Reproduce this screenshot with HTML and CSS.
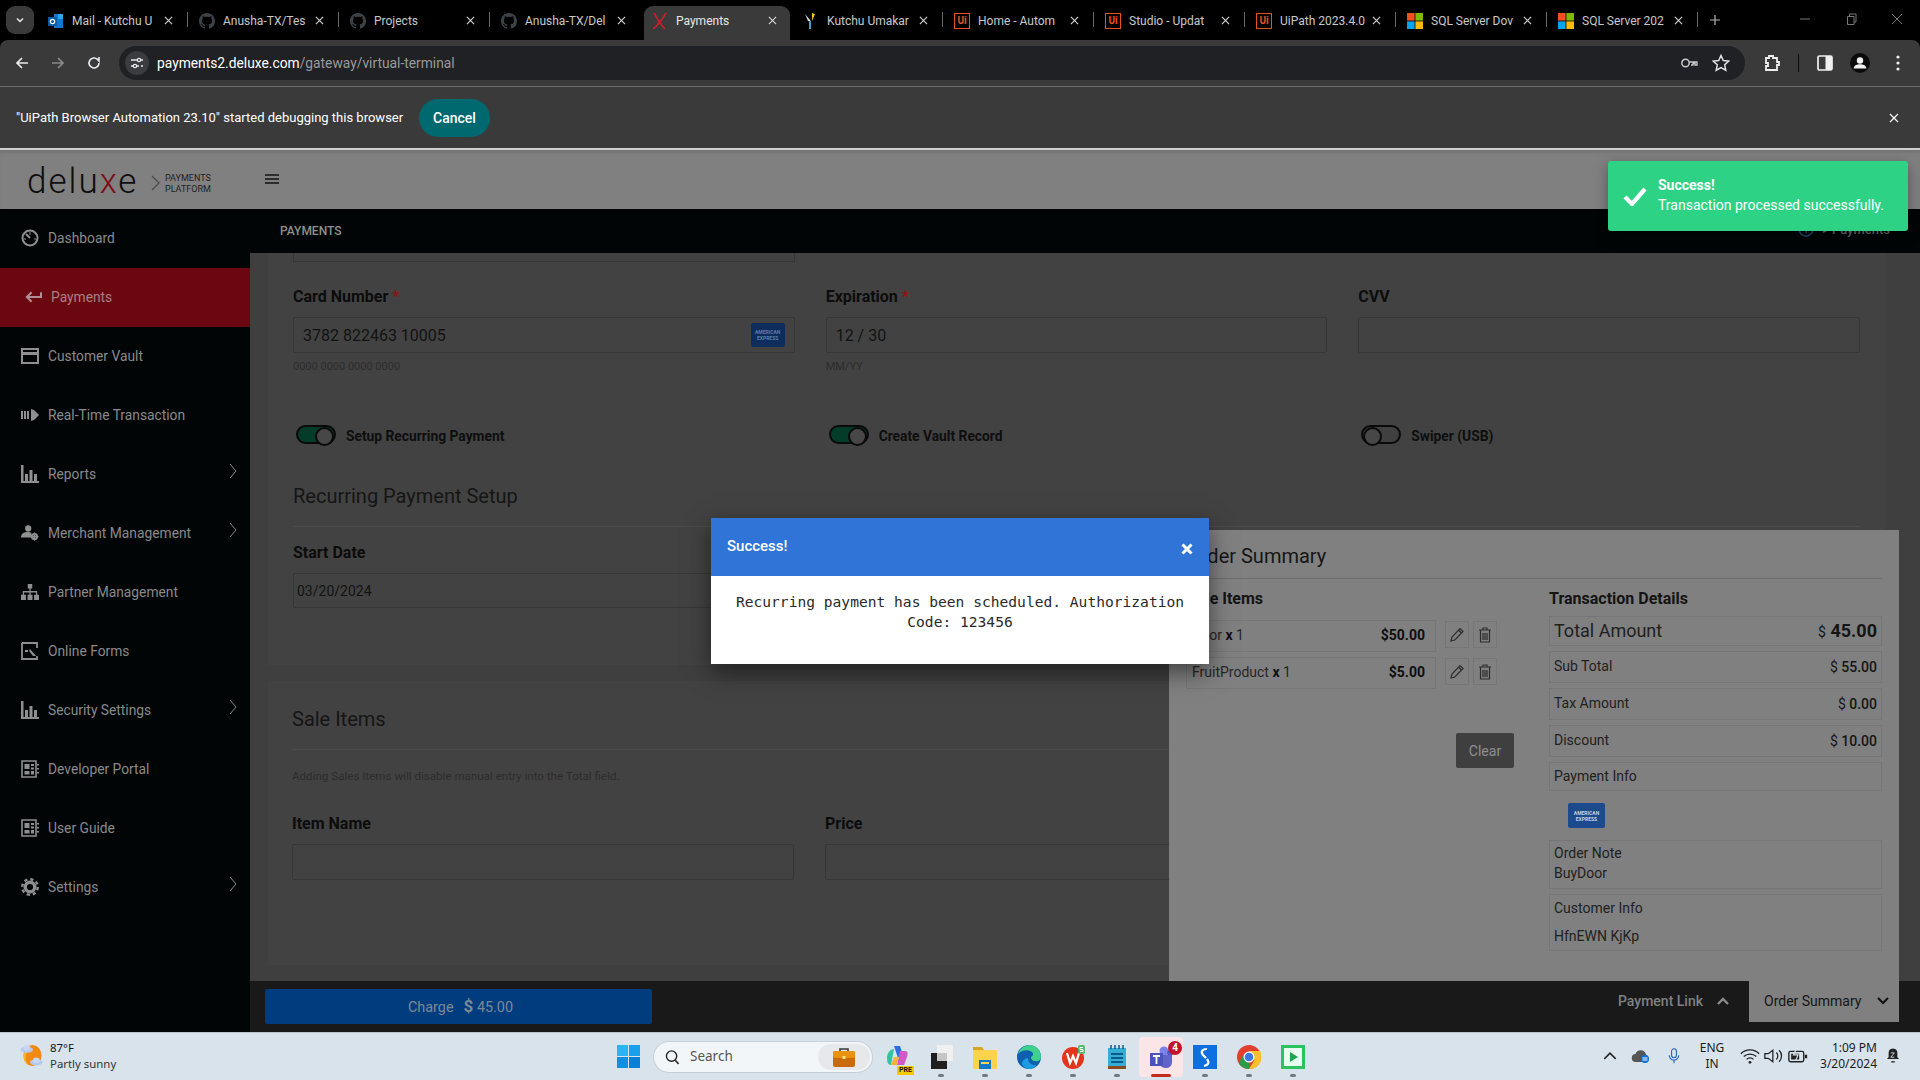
FILE: index.html
```html
<!DOCTYPE html>
<html lang="en">
<head>
<meta charset="utf-8">
<title>Payments</title>
<link rel="stylesheet" href="styles.css">
</head>
<body>
<svg class="defs" width="0" height="0" aria-hidden="true">
  <symbol id="x" viewBox="0 0 10 10"><path d="M1 1l8 8M9 1L1 9" fill="none" stroke="currentColor" stroke-width="1.2"/></symbol>
  <symbol id="gh" viewBox="0 0 16 16"><path fill="#3d4247" d="M8 0C3.58 0 0 3.58 0 8c0 3.54 2.29 6.53 5.47 7.59.4.07.55-.17.55-.38 0-.19-.01-.82-.01-1.49-2.01.37-2.53-.49-2.69-.94-.09-.23-.48-.94-.82-1.13-.28-.15-.68-.52-.01-.53.63-.01 1.08.58 1.23.82.72 1.21 1.87.87 2.33.66.07-.52.28-.87.51-1.07-1.78-.2-3.64-.89-3.64-3.95 0-.87.31-1.59.82-2.15-.08-.2-.36-1.02.08-2.12 0 0 .67-.21 2.2.82.64-.18 1.32-.27 2-.27.68 0 1.36.09 2 .27 1.53-1.04 2.2-.82 2.2-.82.44 1.1.16 1.92.08 2.12.51.56.82 1.27.82 2.15 0 3.07-1.87 3.75-3.65 3.95.29.25.54.73.54 1.48 0 1.07-.01 1.93-.01 2.2 0 .21.15.46.55.38A8.013 8.013 0 0016 8c0-4.42-3.58-8-8-8z"/></symbol>
  <symbol id="ms" viewBox="0 0 16 16"><path fill="#f25022" d="M0 0h7.6v7.6H0z"/><path fill="#7fba00" d="M8.4 0H16v7.6H8.4z"/><path fill="#00a4ef" d="M0 8.4h7.6V16H0z"/><path fill="#ffb900" d="M8.4 8.4H16V16H8.4z"/></symbol>
  <symbol id="chev" viewBox="0 0 8 16"><path d="M1 1l6 7-6 7" fill="none" stroke="currentColor" stroke-width="1"/></symbol>
  <symbol id="doc" viewBox="0 0 18 18"><path fill="none" stroke="currentColor" stroke-width="1.6" d="M1 1h14v16H1z"/><path fill="currentColor" d="M3.5 4h5v5h-5zM3.5 11h5v3.500h-5zM10 4h3v2h-3zM10 7.500h3v2h-3zM10 11h3v3.500h-3zM16 4h2v1.500h-2zM16 8h2v1.500h-2zM16 12h2v1.500h-2z"/></symbol>
  <symbol id="bars" viewBox="0 0 18 18"><path fill="currentColor" d="M0 0h2.500v18H0zM4 9h3v7H4zM8.500 5h3v11h-3zM13 9h3v7h-3zM2.500 16H18v2H2.500z"/></symbol>
  <symbol id="pencil" viewBox="0 0 16 16"><path d="M2 14l1-4 8-8.500 3 3L5.800 13zM9.500 3l3 3" fill="none" stroke="currentColor" stroke-width="1.200"/></symbol>
  <symbol id="trash" viewBox="0 0 14 16"><path d="M1 3h12M5 3V1h4v2M2.500 3.500V15h9V3.500M5 6v7M7 6v7M9 6v7" fill="none" stroke="currentColor" stroke-width="1.200"/></symbol>
</svg>

<div class="tabstrip">
  <div class="tabs-menu"><svg class="i10" viewBox="0 0 10 10"><path d="M2 3.500l3 3 3-3" fill="none" stroke="#e8e8e8" stroke-width="1.500"/></svg></div>
  <div class="tab"><svg class="fav" viewBox="0 0 16 16"><path fill="#0f78d4" d="M6 1h9v14H6z"/><path fill="#28a8ea" d="M10 1h5v5h-5z"/><path fill="#0a5aa8" d="M0 4h9v9H0z"/><circle cx="4.500" cy="8.500" r="2.200" fill="none" stroke="#fff" stroke-width="1.200"/></svg><span class="tab-title">Mail - Kutchu U</span><svg class="tab-x"><use href="#x"/></svg></div>
  <div class="tab"><svg class="fav"><use href="#gh"/></svg><span class="tab-title">Anusha-TX/Tes</span><svg class="tab-x"><use href="#x"/></svg></div>
  <div class="tab"><svg class="fav"><use href="#gh"/></svg><span class="tab-title">Projects</span><svg class="tab-x"><use href="#x"/></svg></div>
  <div class="tab tab-pre"><svg class="fav"><use href="#gh"/></svg><span class="tab-title">Anusha-TX/Del</span><svg class="tab-x"><use href="#x"/></svg></div>
  <div class="tab tab-active"><svg class="fav" viewBox="0 0 16 16"><path d="M2 0c3 5 6 11 11 16M14 0C11 5 7 11 1 16" fill="none" stroke="#d0202a" stroke-width="1.500"/></svg><span class="tab-title">Payments</span><svg class="tab-x"><use href="#x"/></svg></div>
  <div class="tab"><svg class="fav" viewBox="0 0 16 16"><path fill="#f5c518" d="M9 0l3 1-3 7z"/><path fill="#ddd" d="M2 1l5 6 1 2-3-1z"/><path fill="#3aa0d8" d="M6 9l2-1 0 8-2 0z"/></svg><span class="tab-title">Kutchu Umakar</span><svg class="tab-x"><use href="#x"/></svg></div>
  <div class="tab"><span class="ui-fav">Ui</span><span class="tab-title">Home - Autom</span><svg class="tab-x"><use href="#x"/></svg></div>
  <div class="tab"><span class="ui-fav">Ui</span><span class="tab-title">Studio - Updat</span><svg class="tab-x"><use href="#x"/></svg></div>
  <div class="tab"><span class="ui-fav">Ui</span><span class="tab-title">UiPath 2023.4.0</span><svg class="tab-x"><use href="#x"/></svg></div>
  <div class="tab"><svg class="fav"><use href="#ms"/></svg><span class="tab-title">SQL Server Dov</span><svg class="tab-x"><use href="#x"/></svg></div>
  <div class="tab"><svg class="fav"><use href="#ms"/></svg><span class="tab-title">SQL Server 202</span><svg class="tab-x"><use href="#x"/></svg></div>
  <svg class="newtab" viewBox="0 0 12 12"><path d="M6 1v10M1 6h10" stroke="#b5b5b5" stroke-width="1.200"/></svg>
  <div class="winctl">
    <svg class="i12" viewBox="0 0 12 12"><path d="M1 6h10" stroke="#777"/></svg>
    <svg class="i12" viewBox="0 0 12 12"><path d="M2.500 3.500h6.500v8H2.500zM4.500 3.500V1H11v8H9" fill="none" stroke="#777"/></svg>
    <svg class="i12" viewBox="0 0 12 12"><path d="M1 1l10 10M11 1L1 11" stroke="#777"/></svg>
  </div>
</div>

<div class="toolbar">
  <svg class="nav nav-back" viewBox="0 0 16 16"><path d="M14 8H3M8 3L3 8l5 5" fill="none" stroke="#e8eaed" stroke-width="1.700"/></svg>
  <svg class="nav nav-fwd" viewBox="0 0 16 16"><path d="M2 8h11M8 3l5 5-5 5" fill="none" stroke="#8b8b8b" stroke-width="1.700"/></svg>
  <svg class="nav nav-reload" viewBox="0 0 16 16"><path d="M13 8a5 5 0 1 1-1.500-3.600L13 6V2" fill="none" stroke="#e8eaed" stroke-width="1.600"/></svg>
  <div class="omnibox">
    <span class="site-btn"><svg class="i14" viewBox="0 0 14 14"><path d="M1 4h6M1 10h2M11 10h2M11 4h2" stroke="#e8eaed" stroke-width="1.300"/><circle cx="9" cy="4" r="1.700" fill="none" stroke="#e8eaed" stroke-width="1.200"/><circle cx="5" cy="10" r="1.700" fill="none" stroke="#e8eaed" stroke-width="1.200"/><path d="M7 10h2" stroke="#e8eaed" stroke-width="1.300"/></svg></span>
    <span class="url">payments2.deluxe.com<span class="url-path">/gateway/virtual-terminal</span></span>
    <svg class="omni-key" viewBox="0 0 18 18"><circle cx="5.500" cy="9" r="3.700" fill="none" stroke="#c8c8c8" stroke-width="1.500"/><path d="M9 8h8v3h-2v-1.500h-2V11h-2" fill="none" stroke="#c8c8c8" stroke-width="1.300"/></svg>
    <svg class="omni-star" viewBox="0 0 18 18"><path d="M9 1.500l2.300 5 5.400.6-4 3.700 1.100 5.400L9 13.500l-4.800 2.700 1.100-5.400-4-3.700 5.400-.6z" fill="none" stroke="#e0e0e0" stroke-width="1.500"/></svg>
  </div>
  <svg class="tool tool-ext" viewBox="0 0 18 18"><path d="M3 4h3V2h4v2h4v4h2v3h-2v5H3v-4h2V9H3z" fill="none" stroke="#f0f0f0" stroke-width="1.800"/></svg>
  <span class="tool-sep"></span>
  <svg class="tool tool-panel" viewBox="0 0 18 18"><rect x="2" y="2" width="14" height="14" rx="1.500" fill="none" stroke="#f0f0f0" stroke-width="1.700"/><path fill="#f0f0f0" d="M9.500 2H16v14H9.500z"/></svg>
  <svg class="tool tool-profile" viewBox="0 0 20 20"><circle cx="10" cy="10" r="10" fill="#0b0b0b"/><circle cx="10" cy="7.500" r="3.200" fill="#f2f2f2"/><path d="M3.500 15.500c1-3.500 3.500-4.200 6.500-4.200s5.500.7 6.500 4.200z" fill="#f2f2f2"/></svg>
  <svg class="tool tool-menu" viewBox="0 0 4 18"><circle cx="2" cy="3" r="1.600" fill="#f0f0f0"/><circle cx="2" cy="9" r="1.600" fill="#f0f0f0"/><circle cx="2" cy="15" r="1.600" fill="#f0f0f0"/></svg>
</div>

<div class="infobar">
  <span class="info-text">"UiPath Browser Automation 23.10" started debugging this browser</span>
  <span class="info-cancel">Cancel</span>
  <svg class="info-x"><use href="#x"/></svg>
</div>

<div class="app">
  <header class="pagehead">
    <div class="logo"><span class="logo-word">delu<span class="logo-x">x</span>e</span><svg class="logo-chev" viewBox="0 0 9 16"><path d="M1 1l7 7-7 7" fill="none" stroke="#4a4a4a" stroke-width="1.200"/></svg><span class="logo-sub">PAYMENTS<br>PLATFORM</span></div>
    <svg class="burger" viewBox="0 0 14 10"><path d="M0 1h14M0 5h14M0 9h14" stroke="#111" stroke-width="1.500"/></svg>
  </header>
  <nav class="sidebar">
    <a class="side-item"><svg class="side-ic" viewBox="0 0 18 18"><circle cx="9" cy="9" r="7.500" fill="none" stroke="currentColor" stroke-width="2"/><path d="M9 9L5 5" stroke="currentColor" stroke-width="2"/><path d="M9 3v3M3 10h2M13 10h2" stroke="currentColor"/></svg><span>Dashboard</span></a>
    <a class="side-item side-active"><svg class="side-ic side-ic-pay" viewBox="0 0 18 14"><path d="M17 2v5H3M7 2L2 7l5 5" fill="none" stroke="currentColor" stroke-width="2.200"/></svg><span>Payments</span></a>
    <a class="side-item"><svg class="side-ic" viewBox="0 0 18 18"><path fill="currentColor" d="M0 1h18v16H0zm2 7v7h14V8zM2 3v2h14V3z"/></svg><span>Customer Vault</span></a>
    <a class="side-item"><svg class="side-ic" viewBox="0 0 18 18"><path fill="currentColor" d="M0 5h2v8H0zM3 5h2v8H3zM6 5h2v8H6zM10 3l3 1 5 5-5 5-3 1z"/></svg><span>Real-Time Transaction</span></a>
    <a class="side-item"><svg class="side-ic"><use href="#bars"/></svg><span>Reports</span><svg class="side-chev"><use href="#chev"/></svg></a>
    <a class="side-item"><svg class="side-ic" viewBox="0 0 20 18"><circle cx="8" cy="4" r="3.500" fill="currentColor"/><path fill="currentColor" d="M0 14c0-4 3-6 8-6 1.500 0 2.500.2 3.500.6V14z"/><circle cx="15" cy="13" r="2.800" fill="none" stroke="currentColor" stroke-width="2.400"/><path d="M15 8.500v9M10.500 13h9" stroke="currentColor" stroke-width="1.200"/></svg><span>Merchant Management</span><svg class="side-chev"><use href="#chev"/></svg></a>
    <a class="side-item"><svg class="side-ic" viewBox="0 0 20 18"><path fill="currentColor" d="M7.500 0h5v5h-5zM0 12h5.500v6H0zM7.300 12h5.500v6H7.300zM14.500 12H20v6h-5.500zM9.300 5h1.400v3H18v4h-1.400V9.500h-5.900V12H9.300V9.500H3.400V12H2V8h7.300z"/></svg><span>Partner Management</span></a>
    <a class="side-item"><svg class="side-ic" viewBox="0 0 18 18"><path fill="none" stroke="currentColor" stroke-width="1.800" d="M1 1h15v5M1 1v16h15v-3"/><path fill="currentColor" d="M4 8h3v2H4zM9 7l6 7-3 0-4-5z"/></svg><span>Online Forms</span></a>
    <a class="side-item"><svg class="side-ic"><use href="#bars"/></svg><span>Security Settings</span><svg class="side-chev"><use href="#chev"/></svg></a>
    <a class="side-item"><svg class="side-ic"><use href="#doc"/></svg><span>Developer Portal</span></a>
    <a class="side-item"><svg class="side-ic"><use href="#doc"/></svg><span>User Guide</span></a>
    <a class="side-item"><svg class="side-ic" viewBox="0 0 18 18"><circle cx="9" cy="9" r="4.800" fill="none" stroke="currentColor" stroke-width="3.400"/><circle cx="9" cy="9" r="7.800" fill="none" stroke="currentColor" stroke-width="2.400" stroke-dasharray="3.200 2.930"/></svg><span>Settings</span><svg class="side-chev"><use href="#chev"/></svg></a>
  </nav>
  <main class="main">
    <div class="crumbs"><span>PAYMENTS</span><span class="crumb-right"><svg class="i16" viewBox="0 0 16 16"><circle cx="8" cy="8" r="7" fill="none" stroke="#1d4a6e" stroke-width="1.500"/><path d="M8 7v5" stroke="#1d4a6e" stroke-width="1.500"/></svg>&gt; Payments</span></div>
    <div class="content">
      <section class="card card-first">
        <div class="stub-grid"><div class="stub"></div></div>
        <div class="form-grid row-fields">
          <div>
            <label class="lbl">Card Number <b class="req">*</b></label>
            <div class="input input-value">3782 822463 10005<span class="amex amex-dim"><i>AMERICAN</i><i>EXPRESS</i></span></div>
            <div class="hint">0000 0000 0000 0000</div>
          </div>
          <div>
            <label class="lbl">Expiration <b class="req">*</b></label>
            <div class="input input-value">12 / 30</div>
            <div class="hint">MM/YY</div>
          </div>
          <div>
            <label class="lbl">CVV</label>
            <div class="input"></div>
          </div>
        </div>
        <div class="form-grid row-toggles">
          <div class="toggle-row"><span class="toggle toggle-on"></span><span>Setup Recurring Payment</span></div>
          <div class="toggle-row"><span class="toggle toggle-on"></span><span>Create Vault Record</span></div>
          <div class="toggle-row"><span class="toggle"></span><span>Swiper (USB)</span></div>
        </div>
        <h3 class="sect">Recurring Payment Setup</h3>
        <div class="form-grid row-date">
          <div>
            <label class="lbl">Start Date</label>
            <div class="input input-date">03/20/2024</div>
          </div>
        </div>
      </section>
      <section class="card card-second">
        <h3 class="sect">Sale Items</h3>
        <p class="help">Adding Sales Items will disable manual entry into the Total field.</p>
        <div class="form-grid row-item">
          <div><label class="lbl">Item Name</label><div class="input"></div></div>
          <div><label class="lbl">Price</label><div class="input"></div></div>
        </div>
      </section>
    </div>
    <div class="footbar">
      <button class="charge">Charge<b>$</b> 45.00</button>
      <span class="foot-link">Payment Link<svg class="foot-chev" viewBox="0 0 14 10"><path d="M2 8l5-5 5 5" fill="none" stroke="#8a8a8a" stroke-width="2.400"/></svg></span>
      <span class="foot-tab">Order Summary<svg class="foot-chev" viewBox="0 0 14 10"><path d="M2 2l5 5 5-5" fill="none" stroke="#111" stroke-width="2.200"/></svg></span>
    </div>
    <aside class="summary">
      <h3 class="sum-title">Order Summary</h3>
      <div class="sum-grid">
        <div>
          <h4 class="sum-h">Sale Items</h4>
          <div class="sale-rows">
            <div class="sale-row"><div class="sale-box"><span>Door <b>x</b> 1</span><b>$50.00</b></div><span class="sq-btn"><svg class="i16"><use href="#pencil"/></svg></span><span class="sq-btn"><svg class="i14t"><use href="#trash"/></svg></span></div>
            <div class="sale-row"><div class="sale-box"><span>FruitProduct <b>x</b> 1</span><b>$5.00</b></div><span class="sq-btn"><svg class="i16"><use href="#pencil"/></svg></span><span class="sq-btn"><svg class="i14t"><use href="#trash"/></svg></span></div>
          </div>
          <button class="clear">Clear</button>
        </div>
        <div class="sum-details">
          <h4 class="sum-h">Transaction Details</h4>
          <div class="det det-total"><span>Total Amount</span><b><small>$</small> 45.00</b></div>
          <div class="det det-line"><span>Sub Total</span><b><small>$</small> 55.00</b></div>
          <div class="det det-line"><span>Tax Amount</span><b><small>$</small> 0.00</b></div>
          <div class="det det-line"><span>Discount</span><b><small>$</small> 10.00</b></div>
          <div class="det det-pay"><span>Payment Info</span></div>
          <span class="amex amex-big"><i>AMERICAN</i><i>EXPRESS</i></span>
          <div class="det det-note"><span>Order Note</span><span>BuyDoor</span></div>
          <div class="det det-cust"><span>Customer Info</span><span>HfnEWN KjKp</span></div>
        </div>
      </div>
    </aside>
  </main>
</div>

<footer class="taskbar">
  <div class="weather">
    <svg class="wx-ic" viewBox="0 0 24 26"><ellipse cx="13" cy="13" rx="9.500" ry="11" fill="#f28a12"/><path d="M12 2a11 11 0 0 0-5 8 11 11 0 0 0 3 14A11 11 0 0 1 4 13 11 11 0 0 1 12 2z" fill="#f7b733"/><ellipse cx="7" cy="7" rx="6.500" ry="3.200" fill="#b6c9ea"/><ellipse cx="7" cy="5" rx="3.500" ry="3" fill="#c8d6f0"/><ellipse cx="17" cy="20" rx="6.500" ry="3.200" fill="#b6c9ea"/><ellipse cx="17" cy="18" rx="3.500" ry="3" fill="#c8d6f0"/></svg>
    <div class="wx-text"><span class="wx-temp">87°F</span><span>Partly sunny</span></div>
  </div>
  <svg class="start" viewBox="0 0 24 24"><path fill="#29b5f2" d="M0 0h11.500v11.500H0z"/><path fill="#18a0eb" d="M12.500 0H24v11.500H12.500z"/><path fill="#0f8fe0" d="M0 12.500h11.500V24H0z"/><path fill="#0a7fd8" d="M12.500 12.500H24V24H12.500z"/></svg>
  <div class="search">
    <svg class="search-ic" viewBox="0 0 16 16"><circle cx="7" cy="7" r="5.500" fill="none" stroke="#222" stroke-width="1.500"/><path d="M11 11.500l3.500 4" stroke="#222" stroke-width="1.700"/></svg>
    <span class="search-text">Search</span>
    <span class="search-promo"><svg class="promo-ic" viewBox="0 0 22 20"><path d="M7 5V2h8v3" fill="none" stroke="#3a3a3a" stroke-width="1.600"/><rect y="4" width="22" height="16" rx="2" fill="#c96a0c"/><rect y="4" width="22" height="7" rx="2" fill="#e8920f"/><rect x="9.500" y="9" width="3" height="3" fill="#ffe08a"/></svg></span>
  </div>
  <div class="apps">
    <span class="app-btn"><svg class="app-ic" viewBox="0 0 24 24"><path d="M9 1h6l4 12h-6z" fill="#2a6fe0"/><path d="M2 13c0-5 3-9 7-9L6 20c-3 0-4-3-4-7z" fill="#36c4a0"/><path d="M15 6h5c3 0 3 3 2 6l-3 8h-7z" fill="#d25ac8"/><path d="M6 20l3-8h5l-2 8z" fill="#f5b13a"/></svg><span class="pre">PRE</span></span>
    <span class="app-btn app-run"><svg class="app-ic" viewBox="0 0 24 24"><path fill="#1f1f1f" d="M2 8h16v16H2z"/><path fill="#f0f0f0" d="M8 0h16v16H8z"/><path fill="#c6c6c6" d="M8 8h10v8H8z"/></svg></span>
    <span class="app-btn app-run"><svg class="app-ic" viewBox="0 0 24 24"><path fill="#d9a520" d="M0 2h9l2 3h13v4H0z"/><path fill="#fbd34d" d="M0 5h24v19H0z"/><path fill="#1478c8" d="M6 15h12v9H6z"/><path fill="#fbd34d" d="M8 17h8v2H8z"/></svg></span>
    <span class="app-btn app-run"><svg class="app-ic" viewBox="0 0 24 24"><circle cx="12" cy="12" r="12" fill="#0f5fb0"/><path d="M1 9C3 3 8 0 13 0c6 0 11 5 11 12 0 3-3 5-6 4-3 0-4-2-4-4 2-1 3-3 1-5C11 4 4 5 1 9z" fill="#3fd08f"/><path d="M11 13c0 5 4 8 9 7-2 2-5 4-8 4-3 0-6-2-7-5 0-3 3-6 6-6z" fill="#1d9be0"/></svg></span>
    <span class="app-btn app-run"><svg class="app-ic" viewBox="0 0 24 24"><circle cx="12" cy="13" r="11" fill="#e5341d"/><path d="M6 8l3 10 3-7 3 7 3-10" fill="none" stroke="#fff" stroke-width="2.200"/><rect x="17" y="0" width="7" height="9" rx="2" fill="#55b96f"/><path d="M22 2.500h-3v2h3v2h-3" fill="none" stroke="#fff"/></svg></span>
    <span class="app-btn app-run"><svg class="app-ic" viewBox="0 0 24 24"><path fill="#35aed6" d="M3 3h18v18H3z"/><path fill="#8a4a1f" d="M3 21h18v3H3z"/><path fill="#0e5a8c" d="M6 8h12v2H6zM6 12h12v2H6zM6 16h12v2H6z"/><path stroke="#0e5a8c" stroke-width="1.500" d="M6 0v4M10 0v4M14 0v4M18 0v4"/></svg></span>
    <span class="app-btn app-teams"><svg class="app-ic" viewBox="0 0 24 24"><circle cx="15" cy="6" r="4.500" fill="#7b83eb"/><circle cx="21" cy="8" r="3" fill="#5059c9"/><path d="M10 10h13v7c0 4-3 6-6 6s-7-2-7-6z" fill="#6264c9"/><rect x="1" y="8" width="13" height="13" fill="#4b53bc"/><path d="M4 11h7M7.500 11v8" stroke="#fff" stroke-width="1.800"/></svg><span class="badge">4</span></span>
    <span class="app-btn app-run"><svg class="app-ic" viewBox="0 0 24 24"><path fill="#0f6fe0" d="M0 0h24v24H0z"/><path d="M14 4c-4 0-7 2-4 6l3 3M11 21c4-1 6-3 3-7" fill="none" stroke="#fff" stroke-width="2.200"/></svg></span>
    <span class="app-btn app-run"><svg class="app-ic" viewBox="0 0 24 24"><circle cx="12" cy="12" r="12" fill="#e1402f"/><path d="M12 24a12 12 0 0 1-10.400-6L7 9l5 9z" fill="#2d9a48"/><path d="M12 6h10.900A12 12 0 0 1 12 24l5.500-9z" fill="#fbc02d"/><circle cx="12" cy="12" r="5.500" fill="#fff"/><circle cx="12" cy="12" r="4.300" fill="#3b78e7"/></svg></span>
    <span class="app-btn app-run"><svg class="app-ic" viewBox="0 0 24 24"><path fill="#29c35f" d="M0 0h24v24H0z"/><path fill="#e8fff0" d="M3 3h18v18H3z"/><path fill="#1fa750" d="M9 7l8 5-8 5z"/></svg></span>
  </div>
  <div class="tray">
    <svg class="tray-ic tray-gap" viewBox="0 0 14 14"><path d="M2 9.500l5-5 5 5" fill="none" stroke="#222" stroke-width="1.300"/></svg>
    <svg class="tray-ic tray-gap" viewBox="0 0 20 16"><path d="M5 14a4 4 0 0 1-.5-8 5.500 5.500 0 0 1 10.500.500A4 4 0 0 1 15 14z" fill="#555"/><circle cx="14" cy="11" r="4" fill="#0a70d8"/><path d="M11.500 10h5M11.500 12h5" stroke="#fff"/></svg>
    <svg class="tray-ic tray-gap2" viewBox="0 0 16 20"><rect x="5" y="1" width="6" height="11" rx="3" fill="none" stroke="#1a5cc0" stroke-width="1.300"/><path d="M2 9a6 6 0 0 0 12 0M8 15v4" fill="none" stroke="#1a5cc0" stroke-width="1.300"/></svg>
    <div class="lang"><span>ENG</span><span>IN</span></div>
    <svg class="tray-ic" viewBox="0 0 18 14"><path d="M1 5a11 11 0 0 1 16 0M3.500 7.500a8 8 0 0 1 11 0M6 10a4 4 0 0 1 6 0" fill="none" stroke="#222" stroke-width="1.100"/><circle cx="9" cy="12.500" r="1.200" fill="#222"/></svg>
    <svg class="tray-ic" viewBox="0 0 18 14"><path d="M1 5h3l4-3v10L4 9H1z" fill="none" stroke="#222" stroke-width="1.100"/><path d="M11 4a4 4 0 0 1 0 6M13.500 2a7 7 0 0 1 0 10" fill="none" stroke="#222" stroke-width="1.100"/></svg>
    <svg class="tray-ic" viewBox="0 0 18 14"><rect x="1" y="3" width="13" height="9" rx="1.500" fill="none" stroke="#222" stroke-width="1.200"/><path fill="#222" d="M15 6h2v3h-2zM3 5h7v5H3z"/><path d="M8 0L5 6h4l-2 5" fill="none" stroke="#d8e3ec" stroke-width="1"/></svg>
    <div class="clock"><span>1:09 PM</span><span>3/20/2024</span></div>
    <svg class="tray-bell" viewBox="0 0 16 18"><path d="M8 1c3.500 0 5 2.500 5 5v5l2 2H1l2-2V6c0-2.500 1.500-5 5-5z" fill="#222"/><path d="M6 15.500h4v1.500H6z" fill="#222"/><path d="M5.500 6h4l-4 5h4" fill="none" stroke="#d8e3ec"/></svg>
  </div>
</footer>

<div class="toast">
  <svg class="toast-check" viewBox="0 0 24 20"><path d="M2 11l7 7L22 3" fill="none" stroke="#fff" stroke-width="4.200"/></svg>
  <div class="toast-text"><b>Success!</b><span>Transaction processed successfully.</span></div>
</div>

<div class="modal">
  <div class="modal-head"><span>Success!</span><svg class="modal-x" viewBox="0 0 12 12"><path d="M1.500 1.500l9 9M10.500 1.500l-9 9" stroke="#fff" stroke-width="3"/></svg></div>
  <div class="modal-body">Recurring payment has been scheduled. Authorization Code: 123456</div>
</div>
</body>
</html>
```
FILE: styles.css
```css
* { box-sizing: border-box; }
html, body { margin: 0; padding: 0; }
body { width: 1920px; height: 1080px; overflow: hidden; position: relative; display: flex; flex-direction: column; background: #000; font-family: Roboto, "Liberation Sans", sans-serif; }
.defs { position: absolute; }
svg { display: block; flex: none; }
.i10 { width: 10px; height: 10px; }
.i12 { width: 12px; height: 12px; }
.i14 { width: 14px; height: 14px; }
.i16 { width: 16px; height: 16px; }
.i14t { width: 14px; height: 16px; }

/* browser chrome */
.tabstrip { height: 40px; flex: none; display: flex; align-items: flex-end; padding-left: 37px; background: #000; position: relative; }
.tabs-menu { position: absolute; left: 6px; top: 6px; width: 28px; height: 28px; border-radius: 9px; background: #3a3a3a; display: flex; align-items: center; justify-content: center; }
.tab { width: 151px; height: 34px; flex: none; display: flex; align-items: center; padding: 0 0 5px 11px; color: #c9c9c9; font-size: 12px; position: relative; }
.tab::after { content: ""; position: absolute; right: 0; top: 6px; width: 1px; height: 15px; background: #6a6a6a; }
.tab-pre::after, .tab-active::after { display: none; }
.tab-active { width: 146px; margin: 0 2px 0 3px; padding-left: 8px; background: #3a3a3a; border-radius: 9px 9px 0 0; color: #e8e8e8; }
.fav { width: 16px; height: 16px; }
.ui-fav { width: 16px; height: 16px; border: 1px solid #e8501f; color: #e8501f; font-size: 10px; font-weight: 700; line-height: 14px; text-align: center; flex: none; }
.tab-title { margin-left: 8px; width: 78px; white-space: nowrap; }
.tab-x { width: 9px; height: 9px; color: #d8d8d8; margin-left: 14px; }
.newtab { width: 12px; height: 12px; margin: 0 0 14px 11px; }
.winctl { margin-left: auto; margin-right: 17px; height: 40px; display: flex; gap: 34px; align-items: center; padding-bottom: 2px; }

.toolbar { height: 47px; flex: none; background: #3a3a3a; border-bottom: 1px solid #6e6e6e; border-radius: 8px 8px 0 0; display: flex; align-items: center; padding-bottom: 1px; }
.nav { width: 16px; height: 16px; }
.nav-back { margin-left: 14px; }
.nav-fwd { margin-left: 20px; }
.nav-reload { margin-left: 20px; }
.omnibox { margin-left: 17px; width: 1626px; height: 34px; border-radius: 17px; background: #202124; display: flex; align-items: center; padding-left: 6px; }
.site-btn { width: 24px; height: 24px; border-radius: 50%; background: #3b3c3f; display: flex; align-items: center; justify-content: center; }
.url { margin-left: 8px; color: #fff; font-size: 13.800px; }
.url-path { color: #9a9a9a; }
.omni-key { width: 18px; height: 18px; margin-left: auto; }
.omni-star { width: 18px; height: 18px; margin-left: 14px; margin-right: 15px; }
.tool { width: 18px; height: 18px; }
.tool-ext { margin-left: 18px; }
.tool-sep { width: 1px; height: 18px; background: #0e0e0e; margin-left: 17px; }
.tool-panel { margin-left: 17px; }
.tool-profile { width: 20px; height: 20px; margin-left: 16px; }
.tool-menu { width: 4px; margin-left: 26px; }

.infobar { height: 63px; flex: none; background: #3a3a3a; border-bottom: 2px solid #cfcfcf; display: flex; align-items: center; padding-left: 16px; }
.info-text { color: #fff; font-size: 13px; width: 403px; white-space: nowrap; }
.info-cancel { width: 71px; height: 38px; border-radius: 19px; background: #006970; color: #fff; font-size: 14px; font-weight: 500; display: flex; align-items: center; justify-content: center; }
.info-x { width: 10px; height: 10px; color: #fff; margin-left: auto; margin-right: 21px; }

/* app */
.app { height: 882px; flex: none; display: grid; grid-template-columns: 250px 1fr; grid-template-rows: 59px 823px; }
.pagehead { grid-column: 1 / 3; background: #808080; box-shadow: inset 0 5px 4px -3px #707070; display: flex; align-items: center; padding-left: 27px; }
.logo { width: 238px; display: flex; align-items: center; }
.logo-word { font-family: Roboto, sans-serif; font-weight: 300; font-size: 35px; line-height: 40px; color: #0d0d0d; width: 112px; letter-spacing: 2px; margin-top: 4px; white-space: nowrap; }
.logo-x { color: #7d0d17; }
.logo-chev { width: 9px; height: 16px; margin-left: 12px; margin-top: 6px; }
.logo-sub { margin-left: 5px; font-size: 9px; line-height: 11px; color: #222; margin-top: 9px; }
.burger { width: 14px; height: 10px; margin-top: -1px; }

.sidebar { background: #010506; display: flex; flex-direction: column; }
.side-item { height: 59px; flex: none; display: flex; align-items: center; padding: 0 0 2px 21px; color: #8a8a8a; font-size: 13.800px; }
.side-active { background: #6a0710; color: #a98085; padding-left: 25px; }
.side-ic { width: 18px; height: 18px; margin-right: 9px; color: #8f8f8f; }
.side-ic-pay { width: 17px; height: 14px; color: #b09095; }
.side-chev { width: 8px; height: 16px; margin-left: auto; margin-right: 13px; margin-top: -5px; color: #8a8a8a; }

.main { position: relative; display: flex; flex-direction: column; min-width: 0; background: #404040; }
.crumbs { height: 44px; flex: none; background: #010506; color: #8f8f8f; font-size: 12px; font-weight: 500; display: flex; align-items: center; padding: 0 30px 0 30px; }
.crumb-right { margin-left: auto; display: flex; align-items: center; gap: 8px; color: #6a6a6a; font-size: 13px; margin-top: -4px; }
.content { height: 728px; flex: none; padding-left: 18px; background: #3f3f3f; overflow: hidden; display: flex; flex-direction: column; gap: 16px; }
.card { width: 1617px; background: #424242; padding: 0 25px; flex: none; }
.card-first { height: 412px; }
.card-second { height: 284px; padding-top: 23px; padding-left: 24px; }
.stub-grid { width: 502px; }
.stub { height: 9px; border: 1px solid #363636; border-top: 0; }
.form-grid { display: grid; grid-template-columns: repeat(3, 1fr); column-gap: 31px; }
.row-fields { margin-top: 23px; }
.lbl { display: block; height: 22px; line-height: 24px; font-size: 16px; font-weight: 700; color: #0c0c0c; }
.req { color: #8a1414; font-weight: 700; }
.input { height: 36px; margin-top: 10px; border: 1px solid #363636; border-radius: 2px; display: flex; align-items: center; padding: 0 9px 0 9px; font-size: 16px; color: #121212; }
.input-value { justify-content: space-between; padding-right: 9px; }
.input-date { font-size: 14px; padding-left: 3px; height: 35px; }
.hint { height: 14px; margin-top: 6px; line-height: 16px; font-size: 11px; color: #2c2c2c; }
.amex { display: flex; flex-direction: column; justify-content: center; align-items: center; overflow: hidden; }
.amex i { font-style: normal; font-size: 5px; line-height: 6px; font-weight: 700; letter-spacing: 0; }
.amex-dim { width: 34px; height: 24px; background: #0e2c5c; color: #5f7ca8; border-radius: 2px; }
.amex-big { width: 37px; height: 25px; background: #1d4a8c; color: #c4d2e6; border-radius: 2px; margin: 12px 0 12px 19px; }
.row-toggles { margin-top: 52px; height: 20px; }
.toggle-row { display: flex; align-items: center; font-size: 13.800px; font-weight: 700; color: #0e0e0e; padding-left: 3px; }
.toggle-row span:last-child { margin-top: 2px; }
.toggle { width: 40px; height: 19px; border: 2px solid #0a0a0a; border-radius: 10px; margin-right: 10px; margin-top: -2px !important; position: relative; background: #404040; }
.toggle::after { content: ""; position: absolute; top: 0; left: 0; width: 15px; height: 15px; border-radius: 50%; background: #474747; border: 2px solid #0a0a0a; }
.toggle-on { background: #033d2a; }
.toggle-on::after { left: auto; right: 0; }
.sect { margin: 36px 0 0; height: 46px; line-height: 30px; font-size: 20px; font-weight: 400; color: #151515; border-bottom: 1px solid #4b4b4b; }
.card-second .sect { margin-top: 0; }
.row-date { margin-top: 14px; }
.help { margin: 18px 0 0; height: 16px; line-height: 16px; font-size: 11.600px; color: #2c2c2c; }
.row-item { margin-top: 28px; }

.footbar { height: 51px; flex: none; background: #191919; display: flex; align-items: flex-start; padding-right: 21px; }
.charge { width: 387px; height: 35px; margin: 8px 0 0 15px; border: 0; border-radius: 2px; background: #003c7e; color: #7d8a94; font: 14.400px Roboto, sans-serif; padding: 0 0 2px 4px; }
.charge b { font-size: 17px; margin-left: 10px; }
.foot-link { margin-left: auto; height: 39px; display: flex; align-items: center; font-size: 14px; font-weight: 500; color: #808080; width: 131px; }
.foot-chev { width: 14px; height: 10px; }
.foot-link .foot-chev { margin-left: 13px; }
.foot-tab { width: 150px; height: 41px; background: #808080; color: #151515; font-size: 14px; display: flex; align-items: center; padding: 0 9px 2px 15px; justify-content: space-between; }

.summary { position: absolute; right: 21px; bottom: 51px; width: 730px; height: 451px; background: #808080; padding: 11px 17px 0; color: #1e1e1e; }
.sum-title { margin: 0 0 0 1px; height: 37px; line-height: 30px; font-size: 20px; font-weight: 400; color: #161616; }
.sum-grid { border-top: 1px solid #6e6e6e; display: grid; grid-template-columns: 328px 333px; column-gap: 35px; padding-top: 9px; }
.sum-h { margin: 0 0 0 1px; height: 22px; line-height: 22px; font-size: 16px; font-weight: 700; color: #141414; }
.sum-details .sum-h { margin-left: 0; }
.sale-rows { margin-top: 10px; display: flex; flex-direction: column; gap: 5px; }
.sale-row { display: flex; align-items: flex-start; gap: 4px; height: 32px; }
.sale-box { width: 250px; height: 32px; margin-right: 5px; border: 1px solid #767676; display: flex; align-items: center; justify-content: space-between; padding: 0 10px 2px 5px; font-size: 14px; color: #262626; }
.sale-box b { color: #0e0e0e; font-weight: 700; }
.sale-box span b { color: #111; }
.sq-btn { width: 24px; height: 27px; margin-top: 1px; border: 1px solid #767676; display: flex; align-items: center; justify-content: center; color: #2c2c2c; }
.clear { display: block; width: 58px; height: 35px; margin: 44px 0 0 270px; border: 0; border-radius: 2px; background: #3f3f3f; color: #8f8f8f; font: 14px Roboto, sans-serif; }
.det { border: 1px solid #767676; padding: 0 4px; margin-top: 5px; font-size: 14px; color: #202020; display: flex; justify-content: space-between; align-items: center; }
.det b { font-weight: 500; color: #151515; }
.det small { font-size: inherit; font-weight: 400; }
.det-total { height: 30px; margin-top: 6px; padding-bottom: 2px; font-size: 18px; }
.det-total b { font-weight: 700; }
.det-total small { font-size: 14px; }
.det-line { height: 32px; }
.det-line span { margin-top: -2px; }
.det-pay { height: 29px; padding-bottom: 2px; }
.det-note { height: 49px; margin-top: 0; padding-bottom: 3px; flex-direction: column; align-items: flex-start; justify-content: center; line-height: 20px; }
.det-cust { height: 57px; padding-bottom: 1px; flex-direction: column; align-items: flex-start; justify-content: center; line-height: 28px; }

/* taskbar */
.taskbar { height: 48px; flex: none; display: flex; align-items: center; background: #d8e3ec; border-top: 1px solid #bcc4cb; padding-bottom: 2px; color: #1c1c1c; font-family: "Noto Sans", "Open Sans", sans-serif; }
.weather { width: 617px; padding-left: 20px; display: flex; align-items: center; }
.wx-ic { width: 23px; height: 25px; margin-right: 7px; }
.wx-text { display: flex; flex-direction: column; font-size: 11.400px; line-height: 16px; color: #333; }
.wx-temp { color: #111; }
.start { width: 23px; height: 23px; margin-top: 2px; }
.search { width: 218px; height: 30px; margin: 2px 0 0 14px; border-radius: 15px; background: #f3f6f9; box-shadow: 0 0 0 1px #c7d0d8; display: flex; align-items: center; padding: 0 2px 0 11px; font-size: 13.500px; color: #555; }
.search-ic { width: 15px; height: 16px; }
.search-text { margin: -2px 0 0 10px; }
.search-promo { margin-left: auto; width: 52px; height: 26px; border-radius: 13px; background: #e6e8ea; display: flex; align-items: center; justify-content: center; }
.promo-ic { width: 22px; height: 22px; }
.apps { display: flex; margin: 2px 0 0 3px; }
.app-btn { width: 44px; height: 40px; position: relative; display: flex; align-items: center; justify-content: center; }
.app-ic { width: 24px; height: 24px; }
.app-run::after { content: ""; position: absolute; bottom: 0; left: 19px; width: 6px; height: 3px; border-radius: 2px; background: #707a82; }
.pre { position: absolute; right: 5px; bottom: 2px; background: #f5c800; color: #111; font: 700 7px/9px Roboto, sans-serif; padding: 0 2px; }
.app-teams { background: #fbe5e6; border-radius: 4px; }
.app-teams::after { content: ""; position: absolute; bottom: 0; left: 12px; width: 20px; height: 3px; border-radius: 2px; background: #c42b1c; }
.badge { position: absolute; right: 1px; top: 4px; width: 14px; height: 14px; border-radius: 50%; background: #c4122f; color: #fff; font: 700 10px/14px Roboto, sans-serif; text-align: center; }
.tray { margin-left: auto; padding-right: 20px; display: flex; align-items: center; }
.tray-ic { width: 24px; height: 16px; }
.tray-gap { margin-right: 7px; }
.tray-gap2 { margin: 0 8px 0 2px; }
.lang { width: 36px; display: flex; flex-direction: column; align-items: center; font-size: 12px; line-height: 16px; margin-right: 8px; }
.clock { width: 67px; display: flex; flex-direction: column; align-items: flex-end; font-size: 12px; line-height: 16px; margin-right: 9px; }
.tray-bell { width: 14px; height: 17px; }

/* overlays */
.toast { position: absolute; left: 1608px; top: 161px; width: 300px; height: 70px; border-radius: 3px; background: #2ed285; box-shadow: 0 4px 14px rgba(0,0,0,.35); display: flex; align-items: center; padding: 0 0 2px 15px; color: #fff; font-size: 14px; }
.toast-check { width: 24px; height: 20px; margin: 2px 11px 0 0; }
.toast-text { display: flex; flex-direction: column; line-height: 20px; }
.modal { position: absolute; left: 711px; top: 518px; width: 498px; height: 146px; background: #fff; box-shadow: 0 8px 22px rgba(0,0,0,.5); }
.modal-head { height: 58px; background: #2f74d6; color: #fff; font-size: 15px; font-weight: 500; display: flex; align-items: center; justify-content: space-between; padding: 0 16px 3px 16px; }
.modal-x { width: 12px; height: 12px; margin-top: 6px; }
.modal-body { padding: 16px 15px 0; text-align: center; font: 14.600px/20px "DejaVu Sans Mono", "Liberation Mono", monospace; color: #2a2a2a; }
```
